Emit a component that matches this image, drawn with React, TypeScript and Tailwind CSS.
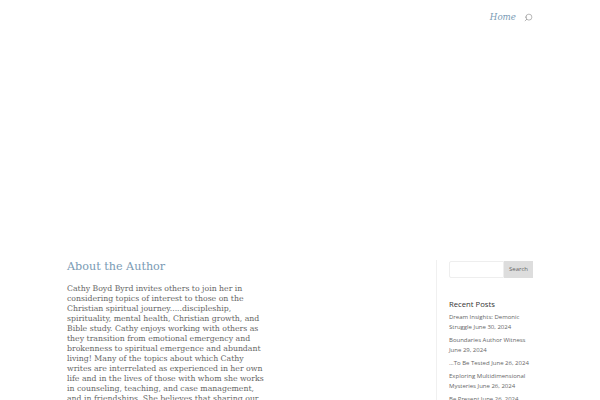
import { Search } from 'lucide-react';

const posts = [
  { title: 'Dream Insights: Demonic Struggle', date: 'June 30, 2024' },
  { title: 'Boundaries Author Witness', date: 'June 29, 2024' },
  { title: '…To Be Tested', date: 'June 26, 2024' },
  { title: 'Exploring Multidimensional Mysteries', date: 'June 26, 2024' },
  { title: 'Be Present', date: 'June 26, 2024' },
];

const App = () => {
  return (
    <div className="h-[400px] w-[600px] overflow-hidden bg-white">
      <header className="flex h-[260px] items-start justify-end pt-[10px] pr-[67px]">
        <a className="text-[8.7px] leading-[14px] italic text-[#7a9bb5] font-['DejaVu_Serif',serif]">Home</a>
        <Search size={9} strokeWidth={1.25} className="ml-[8px] mt-[3px] -scale-x-100 text-[#666666]" />
      </header>

      <main className="flex pl-[67px] pr-[67px]">
        <article className="w-[199px] font-['DejaVu_Serif',serif]">
          <h2 className="text-[11.2px] leading-[14px] text-[#7a9bb5]">About the Author</h2>
          <p className="mt-[10px] text-[7.75px] leading-[10px] text-[#666666]">
            Cathy Boyd Byrd invites others to join her in considering topics of interest to those on the
            Christian spiritual journey.....discipleship, spirituality, mental health, Christian growth, and
            Bible study. Cathy enjoys working with others as they transition from emotional emergency and
            brokenness to spiritual emergence and abundant living! Many of the topics about which Cathy
            writes are interrelated as experienced in her own life and in the lives of those with whom she
            works in counseling, teaching, and case management, and in friendships. She believes that sharing our
          </p>
        </article>

        <aside className="ml-auto w-[97px] border-l border-[#f0f0f0] pt-[1px] pl-[12px] font-['Open_Sans',sans-serif]">
          <div className="flex h-[17px]">
            <input className="w-[55px] rounded-l-[2px] border border-[#eeeeee] bg-white" />
            <button className="w-[29px] bg-[#dddddd] text-[6px] text-[#666666]">Search</button>
          </div>
          <h4 className="mt-[20px] text-[7.7px] leading-[13px] text-[#333333]">Recent Posts</h4>
          <ul className="mt-[1px]">
            {posts.map((post) => (
              <li key={post.title} className="mb-[3px] text-[6px] leading-[10px] text-[#666666]">
                {post.title} {post.date}
              </li>
            ))}
          </ul>
        </aside>
      </main>
    </div>
  );
};

export default App;
